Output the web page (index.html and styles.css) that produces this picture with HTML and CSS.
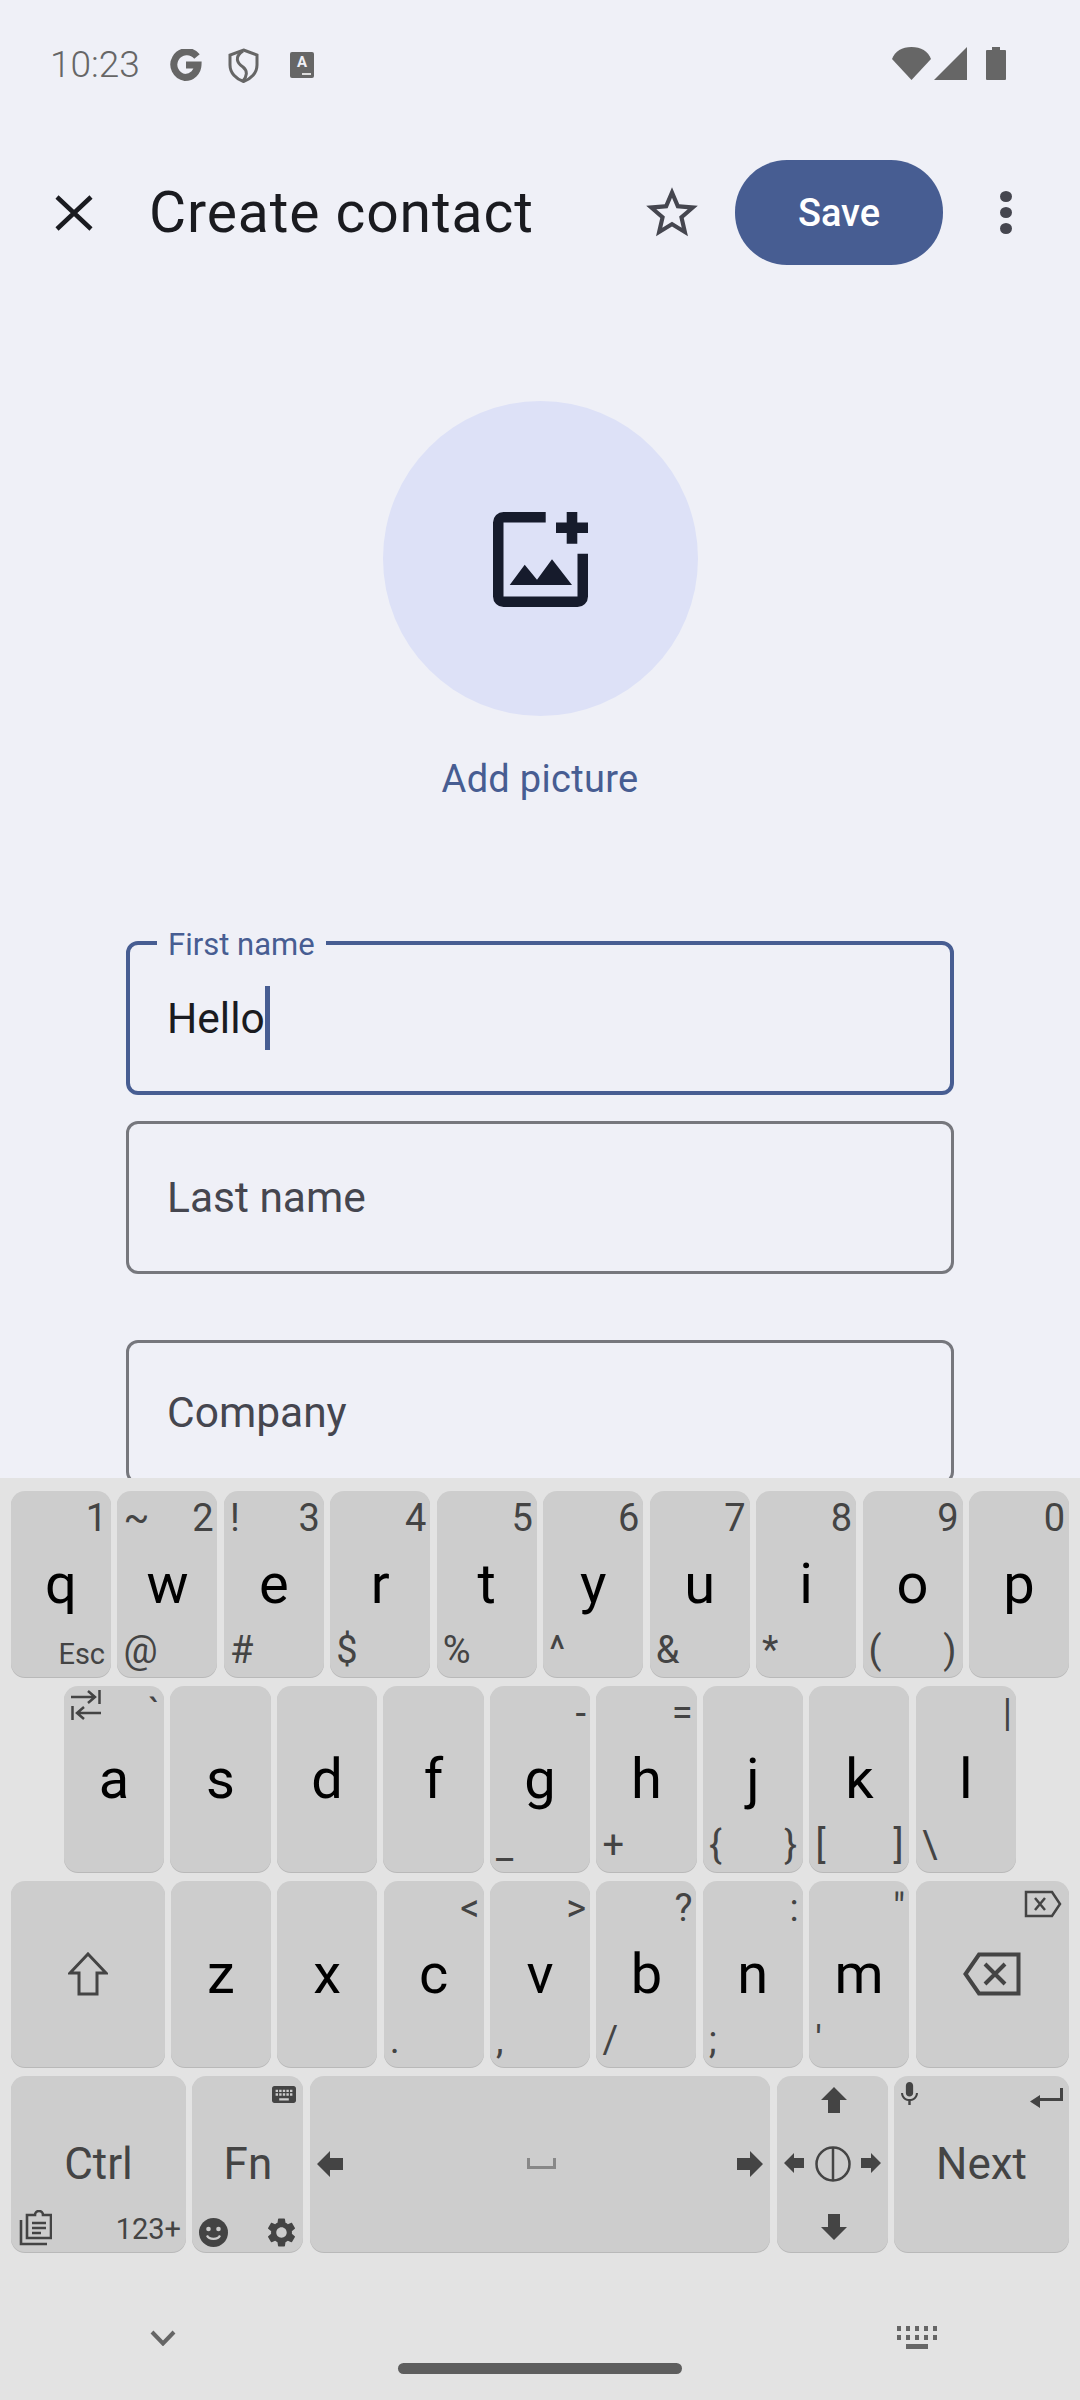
FILE: index.html
```html
<!DOCTYPE html>
<html lang="en">
<head>
<meta charset="utf-8">
<title>Create contact</title>
<link rel="stylesheet" href="styles.css">
</head>
<body>
<main class="app">
  <div class="status">
    <span class="time">10:23</span>
    <svg class="st-g" viewBox="0 0 34 32"><path d="M29 7.500A13 13 0 1 0 17 28.500A13 13 0 0 0 30 16H18" fill="none" stroke="#666" stroke-width="7"/></svg>
    <svg class="st-shield" viewBox="0 0 31 35"><path d="M15.500 2 L29 7 V17 C29 25 23 31 15.500 33.500 C8 31 2 25 2 17 V7 Z" fill="none" stroke="#666" stroke-width="3"/><path d="M15 3 C6 9 9 15 15 19 C20 23 19 28 15 33" fill="none" stroke="#666" stroke-width="3"/></svg>
    <span class="st-a"><span class="st-a-l">A</span><span class="st-a-d"></span></span>
    <span class="status-gap"></span>
    <svg class="st-wifi" viewBox="0 0 39 33"><path d="M0 12C3 4 10 0 19.500 0S36 4 39 12L19.500 33Z" fill="#666"/></svg>
    <svg class="st-signal" viewBox="0 0 33 33"><path d="M33 0V33H0Z" fill="#666"/></svg>
    <svg class="st-batt" viewBox="0 0 20 33"><path d="M6 0H14V3H19A1 1 0 0 1 20 4V32A1 1 0 0 1 19 33H1A1 1 0 0 1 0 32V4A1 1 0 0 1 1 3H6Z" fill="#666"/></svg>
  </div>
  <header class="bar">
    <svg class="ic-close" viewBox="0 0 38 36"><path d="M2 2L36 34M36 2L2 34" fill="none" stroke="#1a1b20" stroke-width="4.500"/></svg>
    <h1 class="title">Create contact</h1>
    <svg class="ic-star" viewBox="0 0 24 24"><path fill="#45464f" d="M22 9.240l-7.190-.620L12 2 9.190 8.630 2 9.240l5.460 4.730L5.820 21 12 17.270 18.180 21l-1.630-7.030L22 9.240zM12 15.400l-3.760 2.270 1-4.280-3.320-2.880 4.380-.380L12 6.100l1.710 4.040 4.380.380-3.320 2.880 1 4.280L12 15.400z"/></svg>
    <button class="save">Save</button>
    <span class="dots"><i></i><i></i><i></i></span>
  </header>
  <section class="pic">
    <div class="avatar">
      <svg class="ic-add" viewBox="0 0 95 95"><path fill="#161b2c" d="M0 10.500A10.500 10.500 0 0 1 10.500 0H52.700V10.500H10.500V84.500H84.500V41.700H95V84.500A10.500 10.500 0 0 1 84.500 95H10.500A10.500 10.500 0 0 1 0 84.500ZM73.700 0H84.300V10.500H95V21H84.300V31.700H73.700V21H63V10.500H73.700ZM16.700 73L31.700 52.700L44 67.700L59 47.300L79 73Z"/></svg>
    </div>
    <div class="add-label">Add picture</div>
  </section>
  <section class="form">
    <div class="field focus"><span class="notch">First name</span><span class="val">Hello</span><span class="caret"></span></div>
    <div class="field"><span class="ph">Last name</span></div>
    <div class="field spaced"><span class="ph">Company</span></div>
  </section>
</main>

<section class="kbd">
  <div class="row">
    <div class="key">q<span class="lg tr">1</span><span class="lg br esc">Esc</span></div>
    <div class="key">w<span class="lg tl">~</span><span class="lg tr">2</span><span class="lg bl">@</span></div>
    <div class="key">e<span class="lg tl">!</span><span class="lg tr">3</span><span class="lg bl">#</span></div>
    <div class="key">r<span class="lg tr">4</span><span class="lg bl">$</span></div>
    <div class="key">t<span class="lg tr">5</span><span class="lg bl">%</span></div>
    <div class="key">y<span class="lg tr">6</span><span class="lg bl">^</span></div>
    <div class="key">u<span class="lg tr">7</span><span class="lg bl">&amp;</span></div>
    <div class="key">i<span class="lg tr">8</span><span class="lg bl">*</span></div>
    <div class="key">o<span class="lg tr">9</span><span class="lg bl">(</span><span class="lg br">)</span></div>
    <div class="key">p<span class="lg tr">0</span></div>
  </div>
  <div class="row inset">
    <div class="key">a
      <svg class="k-tab" viewBox="0 0 30 30"><path d="M0 7H24M17 1L24 7L17 13M28.500 0V14M30 23H6M13 17L6 23L13 29M1.500 16V30" fill="none" stroke="#444" stroke-width="2.500"/></svg>
      <span class="lg tr">`</span></div>
    <div class="key">s</div>
    <div class="key">d</div>
    <div class="key">f</div>
    <div class="key">g<span class="lg tr">-</span><span class="lg bl">_</span></div>
    <div class="key">h<span class="lg tr">=</span><span class="lg bl">+</span></div>
    <div class="key">j<span class="lg bl">{</span><span class="lg br">}</span></div>
    <div class="key">k<span class="lg bl">[</span><span class="lg br">]</span></div>
    <div class="key">l<span class="lg tr">|</span><span class="lg bl">\</span></div>
  </div>
  <div class="row">
    <div class="key wide">
      <svg class="k-shift" viewBox="0 0 40 44"><path d="M20 2L38 21H29V42H11V21H2Z" fill="none" stroke="#444" stroke-width="3"/></svg>
    </div>
    <div class="key">z</div>
    <div class="key">x</div>
    <div class="key">c<span class="lg tr">&lt;</span><span class="lg bl">.</span></div>
    <div class="key">v<span class="lg tr">&gt;</span><span class="lg bl">,</span></div>
    <div class="key">b<span class="lg tr">?</span><span class="lg bl">/</span></div>
    <div class="key">n<span class="lg tr">:</span><span class="lg bl">;</span></div>
    <div class="key">m<span class="lg tr">"</span><span class="lg bl">'</span></div>
    <div class="key wide">
      <svg class="k-bs-sm" viewBox="0 0 38 28"><path d="M2 2H28L36 14L28 26H2ZM11 8L21 20M21 8L11 20" fill="none" stroke="#444" stroke-width="2.500"/></svg>
      <svg class="k-bs" viewBox="0 0 58 44"><path d="M55.500 2.500H16L2.500 22L16 41.500H55.500ZM22 12L42 32M42 12L22 32" fill="none" stroke="#444" stroke-width="4"/></svg>
    </div>
  </div>
  <div class="row short">
    <div class="key side fn-text">Ctrl
      <svg class="k-clip" viewBox="0 0 33 36"><path d="M2 10V34H28M8 5H16A3 3 0 0 1 24 5H32V28H8ZM13 13H27M13 18H27M13 23H22" fill="none" stroke="#444" stroke-width="2.600"/></svg>
      <span class="num">123+</span></div>
    <div class="key mid fn-text">Fn
      <svg class="k-kb" viewBox="2 5 20 14" preserveAspectRatio="none"><path fill="#444" d="M20 5H4c-1.100 0-1.990.900-1.990 2L2 17c0 1.100.900 2 2 2h16c1.100 0 2-.900 2-2V7c0-1.100-.900-2-2-2zm-9 3h2v2h-2V8zm0 3h2v2h-2v-2zM8 8h2v2H8V8zm0 3h2v2H8v-2zm-1 2H5v-2h2v2zm0-3H5V8h2v2zm9 7H8v-2h8v2zm0-4h-2v-2h2v2zm0-3h-2V8h2v2zm3 3h-2v-2h2v2zm0-3h-2V8h2v2z"/></svg>
      <svg class="k-smile" viewBox="0 0 29 29"><circle cx="14.500" cy="14.500" r="14.500" fill="#444"/><circle cx="9.500" cy="11" r="2.300" fill="#cdcdcd"/><circle cx="19.500" cy="11" r="2.300" fill="#cdcdcd"/><path d="M8 17.500C10 22 19 22 21 17.500" fill="none" stroke="#cdcdcd" stroke-width="2.200"/></svg>
      <svg class="k-gear" viewBox="2 2 20 20"><path fill="#444" d="M19.140 12.940c.040-.300.060-.610.060-.940 0-.320-.020-.640-.070-.940l2.030-1.580c.180-.140.230-.410.120-.610l-1.920-3.320c-.120-.220-.370-.290-.590-.220l-2.390.960c-.500-.380-1.030-.700-1.620-.940l-.360-2.540c-.040-.240-.240-.410-.480-.410h-3.840c-.240 0-.430.170-.470.410l-.360 2.540c-.590.240-1.130.570-1.620.940l-2.390-.960c-.220-.080-.470 0-.590.220L2.740 8.870c-.120.210-.080.470.120.610l2.030 1.580c-.050.300-.090.630-.090.940s.020.640.070.940l-2.030 1.580c-.180.140-.230.410-.120.610l1.920 3.320c.120.220.370.290.590.220l2.390-.960c.500.380 1.030.700 1.620.940l.360 2.540c.050.240.240.410.480.410h3.840c.240 0 .440-.170.470-.410l.360-2.540c.590-.240 1.130-.560 1.620-.940l2.390.960c.220.080.470 0 .590-.220l1.920-3.320c.120-.220.070-.470-.120-.610l-2.010-1.580zM12 15.600c-1.980 0-3.600-1.620-3.600-3.600s1.620-3.600 3.600-3.600 3.600 1.620 3.600 3.600-1.620 3.600-3.600 3.600z"/></svg>
    </div>
    <div class="key space">
      <svg class="k-sl" viewBox="0 0 26 26"><path d="M0 13L13 0V7H26V19H13V26Z" fill="#444"/></svg>
      <svg class="k-sp" viewBox="0 0 29 11"><path d="M1.500 0V9.500H27.500V0" fill="none" stroke="#888" stroke-width="3"/></svg>
      <svg class="k-sr" viewBox="0 0 26 26"><path d="M26 13L13 0V7H0V19H13V26Z" fill="#444"/></svg>
    </div>
    <div class="key mid">
      <svg class="k-up" viewBox="0 0 26 26"><path d="M13 0L26 13H19V26H7V13H0Z" fill="#444"/></svg>
      <svg class="k-down" viewBox="0 0 26 26"><path d="M13 26L26 13H19V0H7V13H0Z" fill="#444"/></svg>
      <svg class="k-left" viewBox="0 0 20 20"><path d="M0 10L10 0V5H20V15H10V20Z" fill="#444"/></svg>
      <svg class="k-right" viewBox="0 0 20 20"><path d="M20 10L10 0V5H0V15H10V20Z" fill="#444"/></svg>
      <svg class="k-circle" viewBox="0 0 36 36"><circle cx="18" cy="18" r="16.500" fill="none" stroke="#444" stroke-width="2.500"/><path d="M18 2V34" stroke="#444" stroke-width="2.500"/></svg>
    </div>
    <div class="key side fn-text">Next
      <svg class="k-mic" viewBox="5 2 14 19"><path fill="#444" d="M12 14c1.660 0 3-1.340 3-3V5c0-1.660-1.340-3-3-3S9 3.340 9 5v6c0 1.660 1.340 3 3 3zm5.300-3c0 3-2.540 5.100-5.300 5.100S6.700 14 6.700 11H5c0 3.410 2.720 6.230 6 6.720V21h2v-3.280c3.280-.480 6-3.300 6-6.720h-1.700z"/></svg>
      <svg class="k-enter" viewBox="0 0 33 20"><path d="M33 0V13H10V20L0 13.500L10 7V10H30V0Z" fill="#444"/></svg>
    </div>
  </div>
  <nav class="nav">
    <svg class="nav-down" viewBox="0 0 26 16"><path d="M2 2L13 13.500L24 2" fill="none" stroke="#666" stroke-width="4"/></svg>
    <svg class="nav-kb" viewBox="0 0 40 23"><path d="M0 0H4V5H0ZM9 0H13V5H9ZM18 0H22V5H18ZM27 0H31V5H27ZM36 0H40V5H36ZM0 9H4V14H0ZM9 9H13V14H9ZM18 9H22V14H18ZM27 9H31V14H27ZM36 9H40V14H36ZM9 18H31V23H9Z" fill="#666"/></svg>
    <span class="home"></span>
  </nav>
</section>
</body>
</html>
```

FILE: styles.css
```css
* { box-sizing: border-box; }
html, body { margin: 0; padding: 0; height: 2400px; overflow: hidden; }
body { background: #eff0f7; font-family: Roboto, "Liberation Sans", sans-serif; color: #1a1b20; }

.app { height: 1478px; overflow: hidden; background: #eff0f7; }

.status { display: flex; align-items: center; height: 130px; padding: 0 74px 0 50px; color: #666; margin-bottom: 30px; }
.time { font-size: 37px; font-weight: 300; line-height: 36px; width: 118px; }
.st-g { width: 34px; height: 32px; }
.st-shield { width: 31px; height: 35px; margin-left: 26px; }
.st-a { position: relative; width: 24px; height: 26px; margin-left: 31px; background: #666; border-radius: 2px; display: flex; justify-content: center; }
.st-a-l { color: #eff0f7; font-size: 15px; font-weight: 700; line-height: 20px; }
.st-a-d { position: absolute; left: 12px; bottom: 3px; width: 9px; height: 2px; background: #ddd; }
.status-gap { flex: 1; }
.st-wifi { width: 39px; height: 33px; margin-top: -3px; }
.st-signal { width: 33px; height: 33px; margin-left: 3px; margin-top: -3px; }
.st-batt { width: 20px; height: 33px; margin-left: 19px; margin-top: -3px; }

.bar { display: flex; align-items: center; height: 105px; padding-left: 55px; }
.ic-close { width: 38px; height: 36px; flex: none; }
.title { margin: 0 0 0 56px; width: 492px; font-size: 57px; font-weight: 400; letter-spacing: .9px; line-height: 70px; white-space: nowrap; color: #1a1b20; }
.ic-star { width: 62px; height: 62px; flex: none; }
.save { width: 208px; height: 105px; margin-left: 32px; border: 0; border-radius: 52px; background: #475d92; color: #fff; font: 500 38px Roboto, sans-serif; flex: none; padding: 0; }
.dots { display: flex; flex-direction: column; gap: 5px; margin-left: 57px; }
.dots i { display: block; width: 12px; height: 11px; border-radius: 50%; background: #45464f; }

.pic { display: flex; flex-direction: column; align-items: center; margin-top: 136px; }
.avatar { width: 315px; height: 315px; border-radius: 50%; background: #dde1f7; display: flex; align-items: center; justify-content: center; }
.ic-add { width: 95px; height: 95px; margin: 1px 0 0 1px; }
.add-label { margin-top: 38px; font-size: 38px; line-height: 50px; color: #475d92; font-weight: 400; letter-spacing: .3px; }

.form { margin: 137px 126px 0 126px; }
.field { position: relative; display: flex; align-items: center; height: 153px; border: 3px solid #76777d; border-radius: 12px; padding-left: 38px; margin-bottom: 26px; font-size: 42.500px; }
.field.focus { height: 154px; border: 4px solid #475d92; padding-left: 37px; }
.field.spaced { margin-top: 66px; height: 144px; }
.notch { position: absolute; left: 27px; top: -16px; padding: 0 11px; background: #eff0f7; color: #475d92; font-size: 31px; line-height: 32px; }
.val { color: #1a1b20; }
.caret { width: 5px; height: 64px; background: #475d92; }
.ph { color: #45464f; }

.kbd { height: 922px; padding: 13px 11px 0; background: #e3e3e3; position: relative; }
.row { display: flex; gap: 6.400px; height: 186px; margin-bottom: 9px; }
.row.inset { padding: 0 53px; }
.row.short { height: 176px; margin-bottom: 0; }
.key { position: relative; flex: 1 1 0; display: flex; align-items: center; justify-content: center; background: #cdcdcd; border-radius: 14px; box-shadow: 0 1px 0 #b9b9b9; font-size: 56px; line-height: 56px; color: #000; }
.key.wide { flex: 0 0 153.500px; }
.key.side { flex: 0 0 175px; }
.key.mid { flex: 0 0 111px; }
.fn-text { font-size: 44px; color: #444; }

.lg { position: absolute; font-size: 38px; line-height: 38px; color: #444; font-weight: 400; }
.tr { top: 8px; right: 4px; }
.tl { top: 8px; left: 6px; }
.bl { bottom: 8px; left: 6px; }
.br { bottom: 8px; right: 6px; }
.esc { font-size: 29px; bottom: 4px; }
.num { position: absolute; right: 5px; bottom: 8px; font-size: 29px; line-height: 30px; font-weight: 400; color: #444; }

.key svg { position: absolute; }
.k-tab { left: 7px; top: 4px; width: 30px; height: 30px; }
.k-shift { left: 57px; top: 71px; width: 40px; height: 44px; }
.k-bs-sm { right: 7px; top: 9px; width: 38px; height: 28px; }
.k-bs { right: 48px; top: 71px; width: 58px; height: 44px; }
.k-clip { left: 8px; top: 134px; width: 33px; height: 36px; }
.k-kb { right: 7px; top: 10px; width: 24px; height: 17px; }
.k-smile { left: 7px; top: 142px; width: 29px; height: 29px; }
.k-gear { right: 7px; top: 142px; width: 29px; height: 29px; }
.k-sl { left: 7px; top: 75px; width: 26px; height: 26px; }
.k-sp { left: 217px; top: 82px; width: 29px; height: 11px; }
.k-sr { right: 7px; top: 75px; width: 26px; height: 26px; }
.k-up { left: 44px; top: 11px; width: 26px; height: 26px; }
.k-down { left: 44px; top: 138px; width: 26px; height: 26px; }
.k-left { left: 7px; top: 77px; width: 20px; height: 20px; }
.k-right { right: 7px; top: 77px; width: 20px; height: 20px; }
.k-circle { left: 38px; top: 70px; width: 36px; height: 36px; }
.k-mic { left: 7px; top: 6px; width: 17px; height: 23px; }
.k-enter { right: 6px; top: 12px; width: 33px; height: 20px; }

.nav { display: flex; justify-content: space-between; align-items: center; padding: 74px 132px 0 139px; }
.nav-down { width: 26px; height: 16px; }
.nav-kb { width: 40px; height: 23px; }
.home { position: absolute; left: 398px; bottom: 26px; width: 284px; height: 11px; border-radius: 6px; background: #5e5e5e; }
```
